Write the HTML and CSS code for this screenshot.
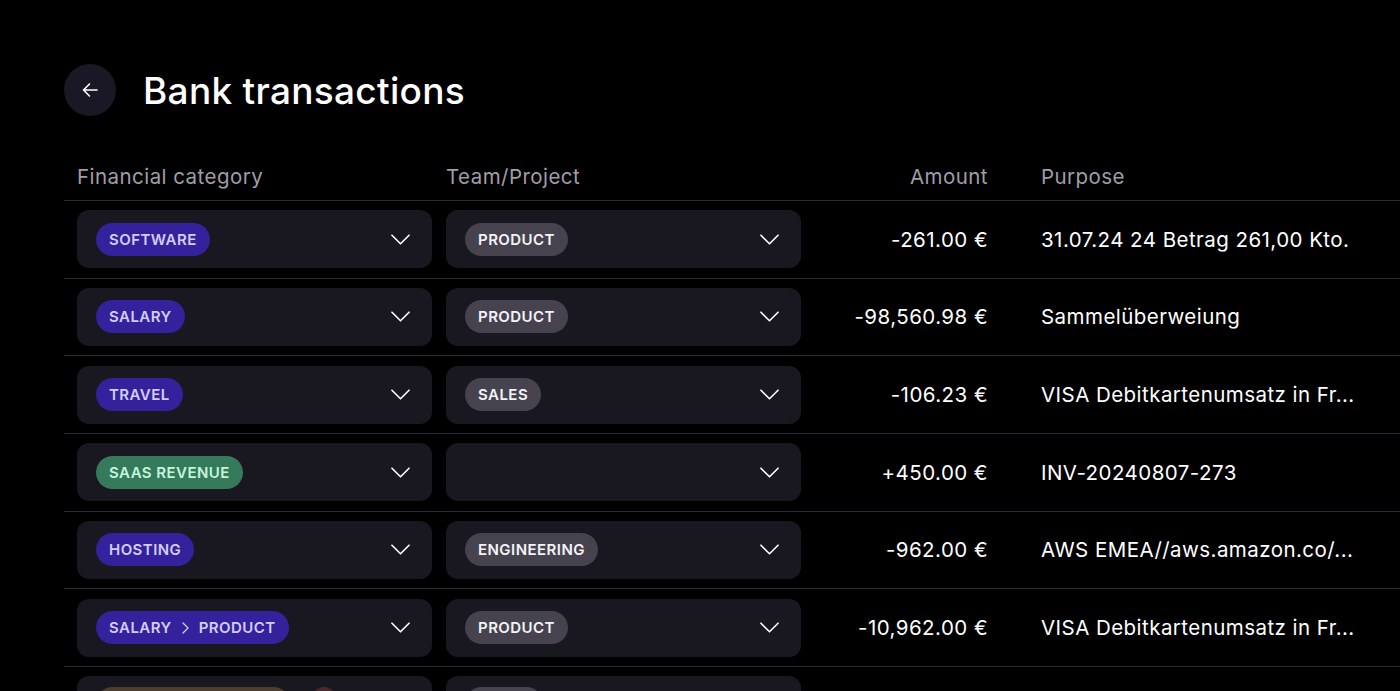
FILE: index.html
```html
<!DOCTYPE html>
<html lang="en">
<head>
<meta charset="utf-8">
<title>Bank transactions</title>
<link rel="stylesheet" href="styles.css">
</head>
<body>
<div class="page">
  <header class="title-bar">
    <button class="back" aria-label="Back">
      <svg width="20" height="20" viewBox="0 0 20 20" fill="none" stroke="#fff" stroke-width="1.6" stroke-linecap="round" stroke-linejoin="round"><path d="M17 10H3.5M9.5 4L3.5 10l6 6"/></svg>
    </button>
    <h1>Bank transactions</h1>
  </header>

  <div class="table">
    <div class="row head">
      <div class="col cat">Financial category</div>
      <div class="col team">Team/Project</div>
      <div class="col amount">Amount</div>
      <div class="col purpose">Purpose</div>
    </div>

    <div class="row">
      <div class="col cat"><div class="select"><span class="pill purple">SOFTWARE</span><svg class="chev" viewBox="0 0 20 11"><path d="M1 1l9 9 9-9"/></svg></div></div>
      <div class="col team"><div class="select"><span class="pill gray">PRODUCT</span><svg class="chev" viewBox="0 0 20 11"><path d="M1 1l9 9 9-9"/></svg></div></div>
      <div class="col amount">-261.00 €</div>
      <div class="col purpose">31.07.24 24 Betrag 261,00 Kto.</div>
    </div>

    <div class="row">
      <div class="col cat"><div class="select"><span class="pill purple">SALARY</span><svg class="chev" viewBox="0 0 20 11"><path d="M1 1l9 9 9-9"/></svg></div></div>
      <div class="col team"><div class="select"><span class="pill gray">PRODUCT</span><svg class="chev" viewBox="0 0 20 11"><path d="M1 1l9 9 9-9"/></svg></div></div>
      <div class="col amount">-98,560.98 €</div>
      <div class="col purpose">Sammelüberweiung</div>
    </div>

    <div class="row">
      <div class="col cat"><div class="select"><span class="pill purple">TRAVEL</span><svg class="chev" viewBox="0 0 20 11"><path d="M1 1l9 9 9-9"/></svg></div></div>
      <div class="col team"><div class="select"><span class="pill gray">SALES</span><svg class="chev" viewBox="0 0 20 11"><path d="M1 1l9 9 9-9"/></svg></div></div>
      <div class="col amount">-106.23 €</div>
      <div class="col purpose">VISA Debitkartenumsatz in Fr...</div>
    </div>

    <div class="row">
      <div class="col cat"><div class="select"><span class="pill green">SAAS REVENUE</span><svg class="chev" viewBox="0 0 20 11"><path d="M1 1l9 9 9-9"/></svg></div></div>
      <div class="col team"><div class="select"><svg class="chev" viewBox="0 0 20 11"><path d="M1 1l9 9 9-9"/></svg></div></div>
      <div class="col amount">+450.00 €</div>
      <div class="col purpose">INV-20240807-273</div>
    </div>

    <div class="row">
      <div class="col cat"><div class="select"><span class="pill purple">HOSTING</span><svg class="chev" viewBox="0 0 20 11"><path d="M1 1l9 9 9-9"/></svg></div></div>
      <div class="col team"><div class="select"><span class="pill gray">ENGINEERING</span><svg class="chev" viewBox="0 0 20 11"><path d="M1 1l9 9 9-9"/></svg></div></div>
      <div class="col amount">-962.00 €</div>
      <div class="col purpose">AWS EMEA//aws.amazon.co/...</div>
    </div>

    <div class="row">
      <div class="col cat"><div class="select"><span class="pill purple">SALARY<svg class="sep" viewBox="0 0 7 12"><path d="M1 1l5 5-5 5"/></svg>PRODUCT</span><svg class="chev" viewBox="0 0 20 11"><path d="M1 1l9 9 9-9"/></svg></div></div>
      <div class="col team"><div class="select"><span class="pill gray">PRODUCT</span><svg class="chev" viewBox="0 0 20 11"><path d="M1 1l9 9 9-9"/></svg></div></div>
      <div class="col amount">-10,962.00 €</div>
      <div class="col purpose">VISA Debitkartenumsatz in Fr...</div>
    </div>

    <div class="row last">
      <div class="col cat"><div class="select"><span class="pill brown"></span><span class="pill red"></span></div></div>
      <div class="col team"><div class="select"><span class="pill gray small"></span></div></div>
    </div>
  </div>
</div>
</body>
</html>
```

FILE: styles.css
```css
* { box-sizing: border-box; }

html, body {
  margin: 0;
  padding: 0;
  background: #000;
  overflow: hidden;
}

body {
  font-family: Inter, "Noto Sans", "Liberation Sans", sans-serif;
  color: #fff;
  width: 1400px;
  height: 691px;
}

.page {
  padding: 64px 0 0 64px;
}

.title-bar {
  display: flex;
  align-items: center;
  gap: 27px;
  height: 52px;
}

.back {
  width: 52px;
  height: 52px;
  border-radius: 50%;
  border: 0;
  background: #1a1824;
  display: flex;
  align-items: center;
  justify-content: center;
  padding: 0;
  flex: none;
}

h1 {
  margin: 0;
  font-size: 37px;
  font-weight: 500;
  letter-spacing: 0.3px;
}

.table {
  margin-top: 44px;
}

.row {
  display: flex;
  align-items: center;
  padding: 9.33px 0 9.33px 13px;
  border-top: 1px solid #2b2935;
  font-size: 20.5px;
  letter-spacing: 0.45px;
}

.row.head {
  border-top: 0;
  padding: 4px 0 0 13px;
  height: 40px;
  align-items: flex-start;
  color: #a09daa;
}

.col.cat, .col.team {
  width: 355px;
  flex: none;
  letter-spacing: 0.45px;
}

.col.team { margin-left: 14px; }

.col.amount {
  width: 173px;
  margin-left: 14px;
  text-align: right;
  flex: none;
}

.col.purpose {
  width: 340px;
  margin-left: 53px;
  flex: none;
  white-space: nowrap;
  overflow: hidden;
}

.select {
  height: 58px;
  background: #191821;
  border-radius: 12px;
  display: flex;
  align-items: center;
  padding: 0 22px 0 19px;
  gap: 10px;
}

.row.last .select { align-items: flex-start; padding-top: 11px; gap: 22px; }

.pill {
  height: 33px;
  border-radius: 17px;
  display: inline-flex;
  align-items: center;
  padding: 0 13px;
  font-size: 15px;
  font-weight: 600;
  letter-spacing: 0.45px;
  white-space: nowrap;
}

.pill.purple { background: #33229b; color: #d4cdfb; }
.pill.green { background: #347a5b; color: #c4f5dd; }
.pill.gray { background: #46434f; color: #f4f3f7; }
.pill.brown { background: #4a3f30; width: 194px; }
.pill.red { background: #4a2a2e; width: 24px; padding: 0; }
.pill.small { width: 78px; }

.sep {
  width: 7px;
  height: 12px;
  margin: 0 10px;
  fill: none;
  stroke: currentColor;
  stroke-width: 1.3;
  stroke-linecap: round;
  stroke-linejoin: round;
}

.chev {
  margin-left: auto;
  width: 19px;
  height: 11px;
  fill: none;
  stroke: #fff;
  stroke-width: 1.7;
  stroke-linecap: round;
  stroke-linejoin: round;
  flex: none;
}
```
